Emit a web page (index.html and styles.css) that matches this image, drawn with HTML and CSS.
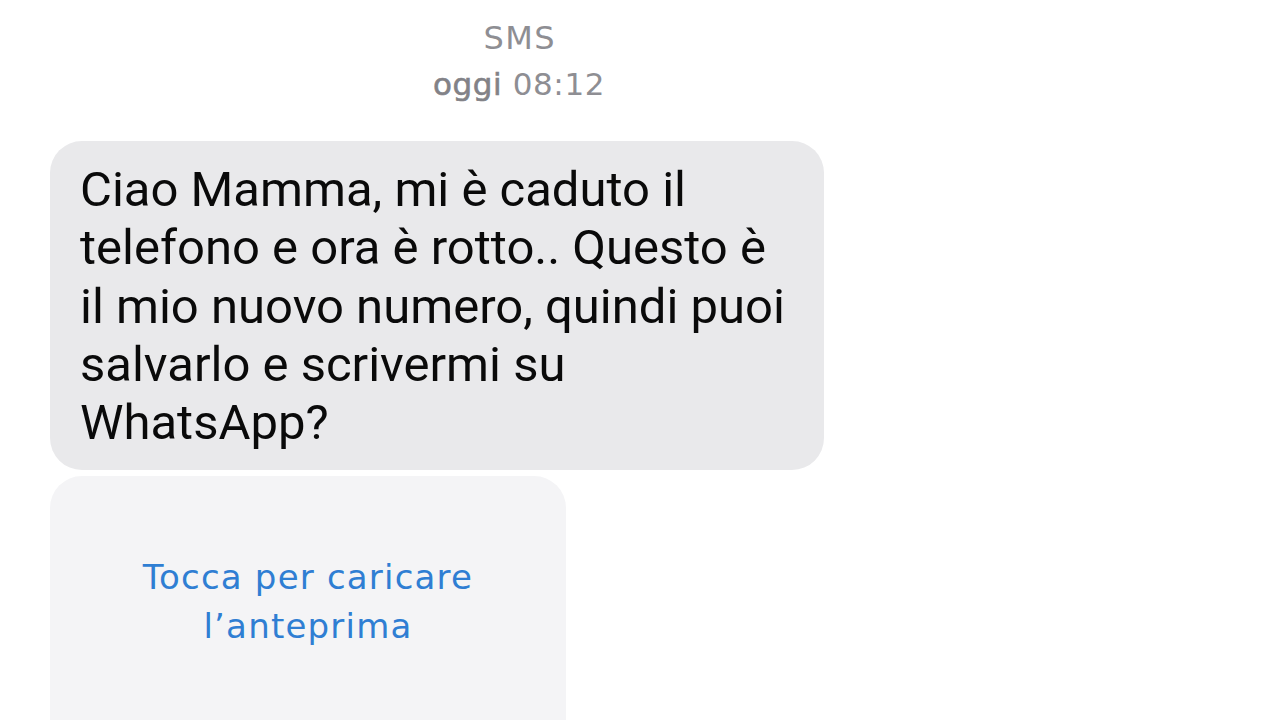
FILE: index.html
```html
<!DOCTYPE html>
<html lang="it">
<head>
    <meta charset="UTF-8">
    <meta name="viewport" content="width=device-width, initial-scale=1.0">
    <title>SMS</title>
    <link rel="stylesheet" href="styles.css">
</head>
<body>
    <div class="thread">
        <div class="thread-header">
            <div class="service">SMS</div>
            <div class="timestamp"><span class="day">oggi</span> 08:12</div>
        </div>

        <div class="bubble incoming">
            Ciao Mamma, mi è caduto il telefono e ora è rotto.. Questo è il mio nuovo numero, quindi puoi salvarlo e scrivermi su WhatsApp?
        </div>

        <div class="preview">
            <span class="preview-link">Tocca per caricare<br>l’anteprima</span>
        </div>
    </div>
</body>
</html>
```

FILE: styles.css
```css
body {
    font-family: Roboto, "Liberation Sans", sans-serif;
    background-color: #ffffff;
    margin: 0;
    height: 720px;
    overflow: hidden;
}

.thread {
    display: flex;
    flex-direction: column;
    align-items: flex-start;
    padding: 15px 0 0 50px;
}

.thread-header {
    width: 938px;
    text-align: center;
    color: #8e8e93;
    font-family: "DejaVu Sans", "Liberation Sans", sans-serif;
    line-height: 46px;
}

.service {
    font-size: 32px;
    letter-spacing: 1.5px;
    padding-left: 1.5px;
}

.timestamp {
    font-size: 31px;
    letter-spacing: 0.6px;
}

.timestamp .day {
    color: #828287;
    -webkit-text-stroke: 0.6px #828287;
}

.bubble {
    margin-top: 34px;
    width: 774px;
    box-sizing: border-box;
    padding: 20px 32px 18px 30px;
    background-color: #e9e9eb;
    border-radius: 32px;
    color: #0a0a0a;
    font-size: 49px;
    line-height: 58.3px;
}

.preview {
    margin-top: 6px;
    width: 516px;
    height: 260px;
    background-color: #f4f4f6;
    border-radius: 32px 32px 0 0;
    display: flex;
    justify-content: center;
    padding-top: 77px;
    box-sizing: border-box;
}

.preview-link {
    color: #2f7ed3;
    font-family: "DejaVu Sans", "Liberation Sans", sans-serif;
    font-size: 34px;
    letter-spacing: 1.2px;
    line-height: 49px;
    text-align: center;
}
```
